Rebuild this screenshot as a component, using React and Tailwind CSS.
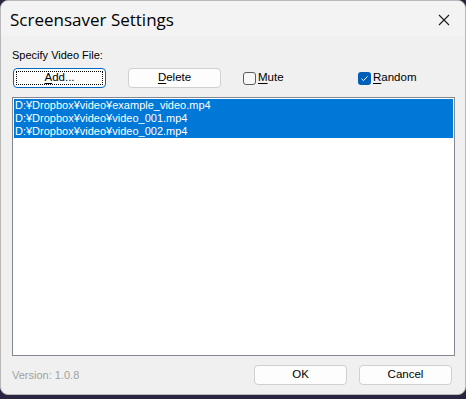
import React, { useState } from "react";

const files = [
  "D:¥Dropbox¥video¥example_video.mp4",
  "D:¥Dropbox¥video¥video_001.mp4",
  "D:¥Dropbox¥video¥video_002.mp4",
];

const Btn = ({ children, focused, className = "" }) => (
  <button
    className={`h-5 w-[93px] rounded-[4px] border bg-[#fdfdfd] text-[11.5px] leading-none text-black ${
      focused ? "border-[#0067c0] p-[2px]" : "border-[#d0d0d0]"
    } ${className}`}
  >
    {focused ? (
      <span className="flex h-full w-full items-center justify-center border border-dotted border-black">
        {children}
      </span>
    ) : (
      <span className="flex h-full w-full items-center justify-center">{children}</span>
    )}
  </button>
);

const Check = ({ checked, accel, rest, className = "" }) => (
  <label className={`flex items-center gap-[2px] text-[11.5px] text-black ${className}`}>
    {checked ? (
      <span className="flex h-[13px] w-[13px] items-center justify-center rounded-[3px] bg-[#005fb8]">
        <svg width="9" height="9" viewBox="0 0 9 9">
          <path d="M1.5 4.8 L3.5 6.6 L7.5 2.4" fill="none" stroke="white" strokeWidth="1" />
        </svg>
      </span>
    ) : (
      <span className="h-[13px] w-[13px] rounded-[3px] border border-[#5d5d5d] bg-[#f7f7f7]" />
    )}
    <span>
      <span className="underline underline-offset-2">{accel}</span>
      {rest}
    </span>
  </label>
);

export default function App() {
  const [muted] = useState(false);
  return (
    <div className="h-[399px] w-[466px] bg-[#2a2440] font-['Liberation_Sans',sans-serif]">
      <div className="flex h-[395px] w-[466px] flex-col rounded-[8px] border border-[#b9b9b9] bg-[#f0f0f0]">
        {/* Title bar */}
        <div className="flex h-[35px] items-center justify-between rounded-t-[8px] bg-[#f3f3f3] pl-[9px] pr-[15px]">
          <span className="pt-[2px] font-['Open_Sans',sans-serif] text-[17px] text-black">Screensaver Settings</span>
          <svg width="12" height="12" viewBox="0 0 12 12" className="mt-[2px]">
            <path d="M1 1 L11 11 M11 1 L1 11" stroke="#1a1a1a" strokeWidth="1.1" />
          </svg>
        </div>

        {/* Body */}
        <div className="flex flex-1 flex-col px-[11px]">
          <div className="mt-[12px] text-[11px] leading-[14px] text-black">Specify Video File:</div>
          <div className="mt-[6px] flex items-center">
            <Btn focused className="ml-[1px]">
              <span>
                <span className="underline underline-offset-2">A</span>dd...
              </span>
            </Btn>
            <Btn className="ml-[22px]">
              <span>
                <span className="underline underline-offset-2">D</span>elete
              </span>
            </Btn>
            <div className="ml-[22px] w-[115px]">
              <Check checked={muted} accel="M" rest="ute" />
            </div>
            <Check checked accel="R" rest="andom" />
          </div>

          {/* File list */}
          <div className="mt-[9px] h-[259px] w-[443px] border border-[#828790] bg-white p-[1px]">
            {files.map((f) => (
              <div key={f} className="h-[13px] bg-[#0078d7] pl-[1px] text-[11px] leading-[13px] text-white">
                {f}
              </div>
            ))}
          </div>

          {/* Footer */}
          <div className="mt-[9px] flex items-center">
            <span className="text-[11px] text-[#a0a0a0]">Version: 1.0.8</span>
            <Btn className="ml-auto">OK</Btn>
            <Btn className="ml-[12px] mr-[2px]">Cancel</Btn>
          </div>
        </div>
      </div>
    </div>
  );
}
